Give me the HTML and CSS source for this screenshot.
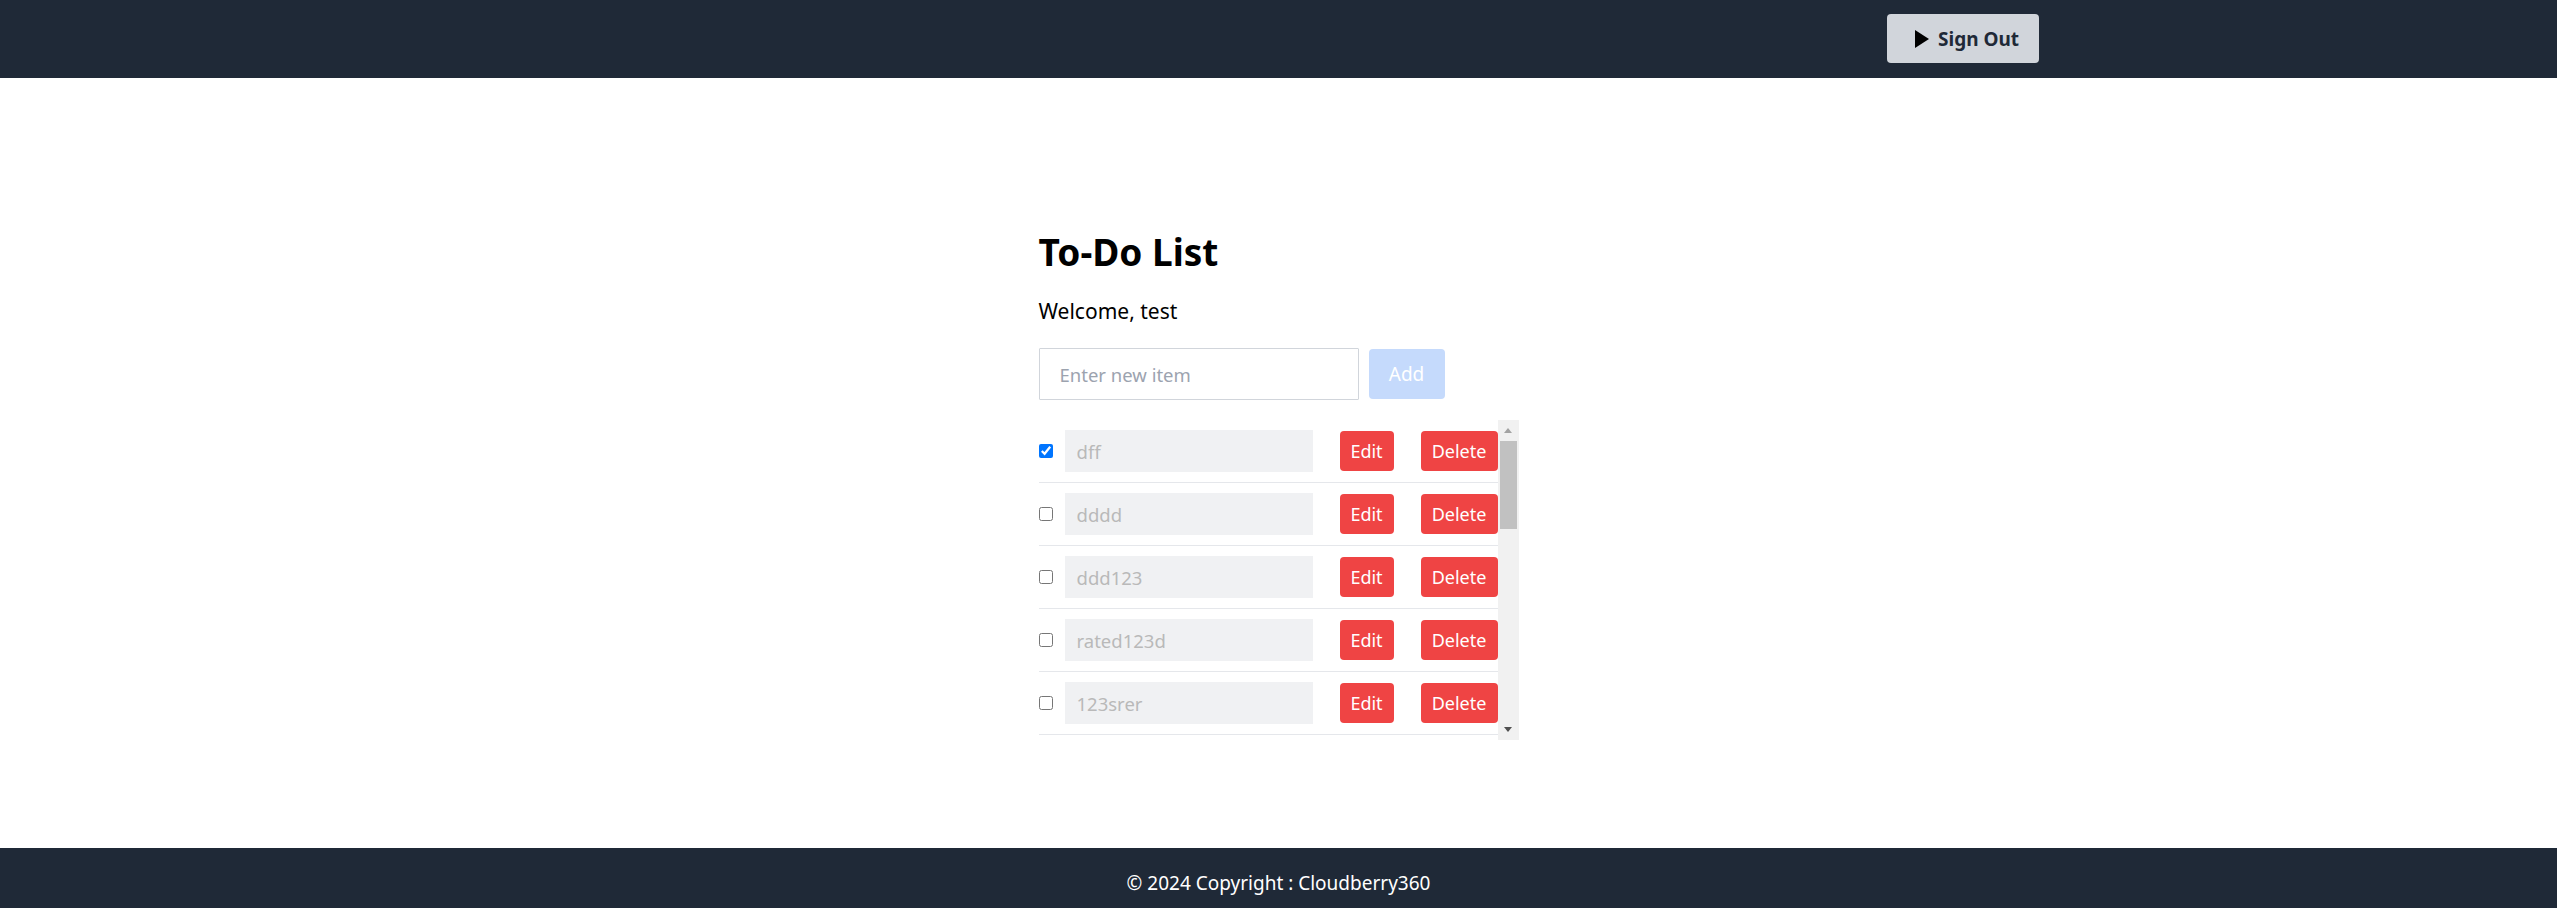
FILE: index.html
```html
<!DOCTYPE html>
<html lang="en">
<head>
<meta charset="utf-8">
<title>To-Do List</title>
<link rel="stylesheet" href="styles.css">
</head>
<body>
<header class="topbar">
  <button class="signout" type="button">
    <svg class="signout-icon" viewBox="0 0 15 18" width="15" height="18" aria-hidden="true"><path d="M1 0 L15 9 L1 18 Z" fill="#000"/></svg>
    <span>Sign Out</span>
  </button>
</header>
<main class="main">
  <section class="todo">
    <h1 class="title">To-Do List</h1>
    <p class="welcome">Welcome, test</p>
    <div class="add-row">
      <input class="new-item" type="text" placeholder="Enter new item">
      <button class="add-btn" type="button" disabled>Add</button>
    </div>
    <div class="list-wrap">
      <ul class="list">
        <li class="item"><input class="check" type="checkbox" checked><input class="item-text" type="text" value="dff" disabled><button class="btn edit" type="button">Edit</button><button class="btn delete" type="button">Delete</button></li>
        <li class="item"><input class="check" type="checkbox"><input class="item-text" type="text" value="dddd" disabled><button class="btn edit" type="button">Edit</button><button class="btn delete" type="button">Delete</button></li>
        <li class="item"><input class="check" type="checkbox"><input class="item-text" type="text" value="ddd123" disabled><button class="btn edit" type="button">Edit</button><button class="btn delete" type="button">Delete</button></li>
        <li class="item"><input class="check" type="checkbox"><input class="item-text" type="text" value="rated123d" disabled><button class="btn edit" type="button">Edit</button><button class="btn delete" type="button">Delete</button></li>
        <li class="item"><input class="check" type="checkbox"><input class="item-text" type="text" value="123srer" disabled><button class="btn edit" type="button">Edit</button><button class="btn delete" type="button">Delete</button></li>
      </ul>
      <div class="scrollbar" aria-hidden="true">
        <div class="sb-btn"><span class="arrow-up"></span></div>
        <div class="sb-track"><div class="sb-thumb"></div></div>
        <div class="sb-btn"><span class="arrow-down"></span></div>
      </div>
    </div>
  </section>
</main>
<footer class="footer">© 2024 Copyright : Cloudberry360</footer>
</body>
</html>
```

FILE: styles.css
```css
* { box-sizing: border-box; }

html, body { height: 100%; }

body {
  margin: 0;
  font-family: "Noto Sans", "Open Sans", sans-serif;
  color: #000;
  background: #fff;
  display: flex;
  flex-direction: column;
  min-height: 100vh;
}

.topbar {
  height: 78px;
  flex: 0 0 78px;
  background: #1f2937;
  display: flex;
  justify-content: flex-end;
  align-items: flex-start;
  padding: 14px 518px 0 0;
}

.signout {
  height: 49px;
  width: 152px;
  display: flex;
  align-items: center;
  gap: 9px;
  padding: 0 0 0 27px;
  border: 0;
  border-radius: 4px;
  background: #d1d5db;
  color: #1f2937;
  font-family: inherit;
  font-weight: 700;
  font-size: 19px;
  cursor: pointer;
}

.signout-icon { flex: 0 0 auto; }

.main {
  flex: 1 1 auto;
  display: flex;
  justify-content: center;
  padding-top: 150px;
}

.todo {
  width: 480px;
}

.title {
  margin: 0;
  font-size: 37px;
  line-height: 48px;
  font-weight: 700;
}

.welcome {
  margin: 20px 0 0;
  font-size: 21px;
  line-height: 30px;
}

.add-row {
  margin-top: 22px;
  display: flex;
  align-items: center;
  gap: 10px;
}

.new-item {
  width: 320px;
  height: 52px;
  border: 1px solid #d1d5db;
  border-radius: 1px;
  padding: 0 20px;
  font-family: inherit;
  font-size: 18.5px;
  color: #111;
  outline: none;
}

.new-item::placeholder { color: #9ca3af; }

.add-btn {
  width: 76px;
  height: 50px;
  border: 0;
  border-radius: 4px;
  background: #c5dafc;
  color: #fff;
  font-family: inherit;
  font-size: 19px;
  padding: 0;
}

.list-wrap {
  margin-top: 20px;
  height: 320px;
  display: flex;
}

.list {
  flex: 1 1 auto;
  list-style: none;
  margin: 0;
  padding: 0;
  overflow: hidden;
}

.scrollbar {
  flex: 0 0 21px;
  width: 21px;
  background: #f1f1f1;
  display: flex;
  flex-direction: column;
}

.sb-btn {
  height: 21px;
  flex: 0 0 21px;
  display: flex;
  align-items: center;
  justify-content: center;
}

.arrow-up {
  width: 0;
  height: 0;
  border-left: 4.5px solid transparent;
  border-right: 4.5px solid transparent;
  border-bottom: 5px solid #a3a3a3;
}

.arrow-down {
  width: 0;
  height: 0;
  border-left: 4.5px solid transparent;
  border-right: 4.5px solid transparent;
  border-top: 5px solid #505050;
}

.sb-track {
  flex: 1 1 auto;
  padding: 0 2px;
}

.sb-thumb {
  height: 88px;
  background: #c1c1c1;
}

.item {
  display: flex;
  align-items: center;
  padding: 10px 0;
  border-bottom: 1px solid #e5e7eb;
}

.check {
  width: 14px;
  height: 14px;
  margin: 0 12px 0 0;
  accent-color: #0075ff;
  flex: 0 0 auto;
}

.item-text {
  width: 248px;
  height: 42px;
  border: 0;
  background: #f0f1f3;
  padding: 0 12px;
  font-family: inherit;
  font-size: 18.5px;
  color: #b9b9b9;
  flex: 0 0 auto;
}

.btn {
  height: 40px;
  border: 0;
  border-radius: 4px;
  background: #ef4444;
  color: #fff;
  font-family: inherit;
  font-size: 18px;
  padding: 0;
  margin-left: 27px;
  flex: 0 0 auto;
}

.edit { width: 54px; }
.delete { width: 77px; }

.footer {
  flex: 0 0 60px;
  height: 60px;
  background: #1f2937;
  color: #fff;
  text-align: center;
  font-size: 19px;
  line-height: 28px;
  padding-top: 21px;
}
```
